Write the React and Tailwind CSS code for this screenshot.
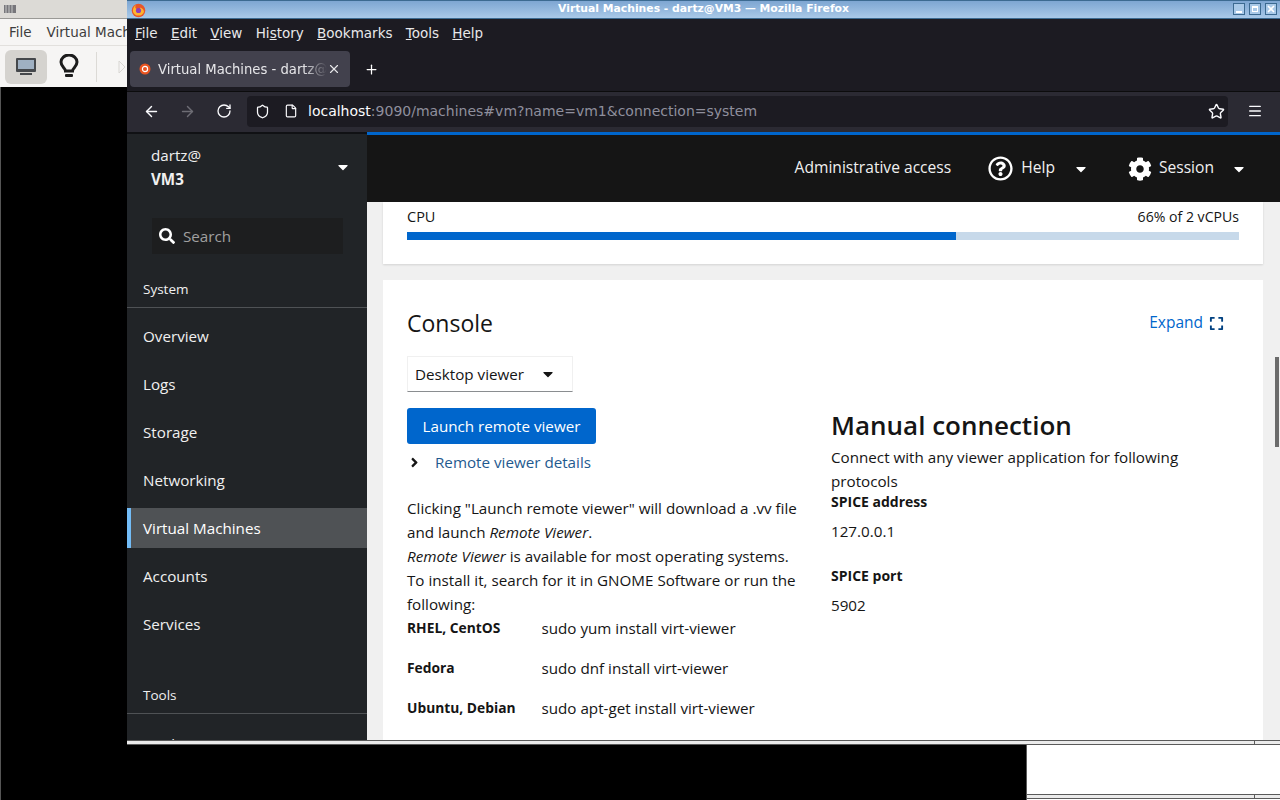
import React from "react";
import { ArrowLeft, ArrowRight, RotateCw, Shield, File, Star, Menu, X, Plus } from "lucide-react";
import { FaCog, FaRegQuestionCircle, FaSearch, FaCaretDown, FaAngleRight, FaExpand } from "react-icons/fa";

const nav = ["Overview", "Logs", "Storage", "Networking", "Virtual Machines", "Accounts", "Services"];

function Caret({ className }) {
  return <FaCaretDown className={className} size={16} />;
}

function BackWindow() {
  return (
    <div className="absolute left-0 top-0 h-[87px] w-[127px] overflow-hidden bg-[#f6f5f4] font-['DejaVu_Sans',sans-serif] text-[#3d3d3d]">
      <div className="flex h-[19px] items-center border-b border-[#9a9996] bg-[#dcdad6] pl-1">
        <svg width="12" height="10" viewBox="0 0 12 10"><rect x="0" y="1" width="12" height="8" fill="#77767b" /><path d="M2 1v8M5 1v8M8 1v8" stroke="#c8c8c8" /></svg>
      </div>
      <div className="flex h-[27px] items-center gap-[15px] whitespace-nowrap border-b border-[#e2e0dd] pl-[9px] text-[13.5px]">
        <span>File</span>
        <span>Virtual Machine</span>
      </div>
      <div className="flex h-[41px] items-center pl-[5px]">
        <div className="flex h-[34px] w-[42px] items-center justify-center rounded-md bg-[#d5d3cf]">
          <svg width="22" height="20" viewBox="0 0 22 20">
            <rect x="1" y="1" width="20" height="14" rx="1" fill="#45484c" />
            <rect x="3" y="3" width="16" height="9" fill="#9fb0c2" />
            <rect x="5" y="16" width="12" height="2" fill="#45484c" />
          </svg>
        </div>
        <div className="ml-[8px] flex w-[28px] justify-center">
          <svg width="20" height="25" viewBox="0 0 20 25" fill="none">
            <path d="M6.500 17c0-3-4.500-4-4.500-9a8 7 0 0 1 16 0c0 5-4.500 6-4.500 9z" stroke="#1c1c1c" strokeWidth="3" fill="#f6f5f4" />
            <rect x="6" y="20" width="8" height="3" rx="1" fill="#1c1c1c" />
          </svg>
        </div>
        <div className="ml-[13px] h-[30px] w-px bg-[#dcdad6]" />
        <svg className="ml-[21px]" width="8" height="14" viewBox="0 0 8 14" fill="none"><path d="M1 1l6 6-6 6z" stroke="#d8d6d3" /></svg>
      </div>
    </div>
  );
}

function TitleBar() {
  return (
    <div className="relative flex h-[19px] shrink-0 items-center justify-center border-y border-[#3c6a91] bg-gradient-to-b from-[#7ea6d2] to-[#a9c9e8]">
      <svg className="absolute left-[4px] top-[2px]" width="15" height="15" viewBox="0 0 15 15">
        <circle cx="7.5" cy="7.5" r="6.8" fill="#e8562a" />
        <path d="M2 9a6 6 0 0 0 11 0c0-2-1.500-4-4-4.500 1 2-2 3-3.500 1.500C4 5 4 3.500 5 2 3 3 1.500 6 2 9z" fill="#ffb52e" />
        <circle cx="7.500" cy="7.500" r="2.600" fill="#8f3fb8" />
      </svg>
      <span className="font-['DejaVu_Sans',sans-serif] text-[10.8px] font-bold text-white">Virtual Machines - dartz@VM3 — Mozilla Firefox</span>
      <div className="absolute right-[3px] top-[2px] flex gap-[4px]">
        <div className="flex h-[12px] w-[12px] items-end justify-center border border-[#3c6a91] bg-[#a9c9e8] pb-[1px]"><div className="h-[2px] w-[6px] bg-white" /></div>
        <div className="flex h-[12px] w-[12px] items-center justify-center border border-[#3c6a91] bg-[#a9c9e8]"><div className="h-[6px] w-[6px] border border-t-2 border-white" /></div>
        <div className="flex h-[12px] w-[12px] items-center justify-center border border-[#3c6a91] bg-[#a9c9e8]"><X size={10} strokeWidth={4} className="text-white" /></div>
      </div>
    </div>
  );
}

function MenuBar() {
  const items = [["F", "ile"], ["E", "dit"], ["V", "iew"], ["Hi", "s", "tory"], ["B", "ookmarks"], ["T", "ools"], ["H", "elp"]];
  return (
    <div className="flex h-[29px] shrink-0 items-center gap-[13.3px] bg-[#1c1b22] pl-[8px] font-['DejaVu_Sans',sans-serif] text-[13.5px] text-[#e8e8ea]">
      {items.map((it, i) => (
        <span key={i}>
          {it.length === 2 ? (<><span className="underline">{it[0]}</span>{it[1]}</>) : (<>{it[0]}<span className="underline">{it[1]}</span>{it[2]}</>)}
        </span>
      ))}
    </div>
  );
}

function TabBar() {
  return (
    <div className="flex h-[43px] shrink-0 items-start bg-[#1c1b22] pl-[3px] pt-[3px]">
      <div className="flex h-[36px] w-[220px] items-center rounded-[4px] bg-[#42414d] pl-[9px] pr-[9px] font-['DejaVu_Sans',sans-serif] text-[13.2px] text-[#e6e6e9]">
        <svg width="12" height="12" viewBox="0 0 12 12" className="shrink-0">
          <circle cx="6" cy="6" r="5.500" fill="#e95420" />
          <circle cx="6" cy="6" r="2.600" fill="none" stroke="#fff" strokeWidth="1.200" />
        </svg>
        <span className="ml-[7px] w-[174px] overflow-hidden whitespace-nowrap pt-[1px] [mask-image:linear-gradient(to_right,black_86%,transparent)]">Virtual Machines - dartz@VM3</span>
        <X size={14} className="ml-auto shrink-0 text-[#e6e6e9]" />
      </div>
      <Plus size={15} strokeWidth={2} className="ml-[14px] mt-[11px] text-white" />
    </div>
  );
}

function NavBar() {
  return (
    <div className="flex h-[41px] shrink-0 items-center border-t border-[#0c0c0d] bg-[#2b2a33] pb-[2px] pl-[16px] text-[#fbfbfe]">
      <ArrowLeft size={17} />
      <ArrowRight size={17} className="ml-[19px] text-[#6e6d75]" />
      <RotateCw size={16} className="ml-[20px]" />
      <div className="ml-[15px] flex h-[31px] w-[981px] shrink-0 items-center rounded-[4px] bg-[#1c1b22] pl-[8px] pr-[3px]">
        <Shield size={15} />
        <File size={14} className="ml-[14px]" />
        <span className="ml-[10px] font-['DejaVu_Sans',sans-serif] text-[14px] text-[#fbfbfe]">localhost<span className="text-[#8f8f9d]">:9090/machines#vm?name=vm1&amp;connection=system</span></span>
        <Star size={17} className="ml-auto" />
      </div>
      <Menu size={16} className="ml-[19px]" />
    </div>
  );
}

function Sidebar() {
  return (
    <aside className="flex w-[240px] shrink-0 flex-col overflow-hidden border-t-2 border-[#101114] bg-[#212427] text-[15.2px] text-[#f0f0f0]">
      <div className="flex items-center justify-between pl-[24px] pr-[16px] pt-[9px] leading-[24px]">
        <div>
          <div>dartz@</div>
          <div className="font-bold">VM3</div>
        </div>
        <Caret className="text-white" />
      </div>
      <div className="ml-[25px] mt-[27px] flex h-[36px] w-[191px] shrink-0 items-center bg-[#1d1e1f] pl-[7px] text-[#a0a0a0]">
        <FaSearch size={16} className="text-white" />
        <span className="ml-[8px]">Search</span>
      </div>
      <div className="mt-[25px] flex h-[29px] shrink-0 items-start border-b border-[#4f5255] pl-[16px] text-[13.5px] leading-[20px]">System</div>
      <div className="mt-[8px] flex shrink-0 flex-col gap-[8px]">
        {nav.map((n) => (
          <div key={n} className={n === "Virtual Machines" ? "flex h-[40px] items-center border-l-4 border-[#73bcf7] bg-[#4f5255] pl-[12px] text-white" : "flex h-[40px] items-center pl-[16px]"}>{n}</div>
        ))}
      </div>
      <div className="mt-[41px] flex h-[29px] shrink-0 items-start border-b border-[#4f5255] pl-[16px] text-[13.5px] leading-[20px]">Tools</div>
      <div className="mt-[10px] flex h-[40px] shrink-0 items-center pl-[16px]">Applications</div>
    </aside>
  );
}

function Header() {
  return (
    <div className="flex h-[70px] shrink-0 items-center justify-end border-t-[3px] border-[#0066cc] bg-[#151515] pr-[33px] text-[15.6px] text-[#f0f0f0]">
      <span className="pb-[2px]">Administrative access</span>
      <FaRegQuestionCircle size={25} className="ml-[37px] text-white" />
      <span className="ml-[8px] pb-[2px]">Help</span>
      <Caret className="ml-[18px] text-white" />
      <FaCog size={24} className="ml-[39px] text-white" />
      <span className="ml-[7px] pb-[2px]">Session</span>
      <Caret className="ml-[17px] text-white" />
    </div>
  );
}

function Row({ os, cmd }) {
  return (
    <div className="flex h-[40px] items-start">
      <span className="w-[134.500px] text-[13.8px] font-bold leading-[24px] text-[#151515]">{os}</span>
      <span className="leading-[24px]">{cmd}</span>
    </div>
  );
}

function Main() {
  return (
    <main className="flex min-w-0 flex-1 flex-col overflow-hidden">
      <Header />
      <div className="relative flex min-h-0 flex-1 flex-col gap-[16px] overflow-hidden bg-[#f0f0f0] pl-[16px] pr-[17px] text-[15.2px] text-[#151515]">
        <div className="h-[62px] shrink-0 bg-white px-[24px] shadow-[0_1px_2px_rgba(3,3,3,0.12)]">
          <div className="flex h-[30px] items-center justify-between text-[14.500px]">
            <span>CPU</span>
            <span className="text-[14.1px]">66% of 2 vCPUs</span>
          </div>
          <div className="flex h-[8px] bg-[#c7d9ea]">
            <div className="h-full w-[66%] bg-[#0066cc]" />
          </div>
        </div>
        <div className="flex-1 bg-white px-[24px] pt-[28px]">
          <div className="flex items-center justify-between pr-[15px]">
            <h2 className="text-[23px] leading-[30px]">Console</h2>
            <div className="flex items-center gap-[6px] text-[#0066cc]">
              <span className="text-[15.5px]">Expand</span>
              <FaExpand size={15} className="text-[#004080]" />
            </div>
          </div>
          <div className="mt-[18px] flex h-[36px] w-[166px] items-center justify-between border border-[#f0f0f0] border-b-[#8a8d90] pl-[7px] pr-[16px]">
            <span>Desktop viewer</span>
            <Caret className="text-[#151515]" />
          </div>
          <div className="mt-[16px] grid grid-cols-[424px_1fr]">
            <div>
              <div className="flex h-[36px] w-[189px] items-center justify-center rounded-[3px] bg-[#0066cc] text-white">Launch remote viewer</div>
              <div className="mt-[6px] flex h-[24px] items-center">
                <FaAngleRight size={15} className="text-[#151515]" />
                <span className="ml-[13px] text-[#1f5a8f]">Remote viewer details</span>
              </div>
              <div className="mt-[22px] w-[400px] leading-[24px]">
                <p>Clicking "Launch remote viewer" will download a .vv file and launch <i>Remote Viewer</i>.</p>
                <p><i>Remote Viewer</i> is available for most operating systems. To install it, search for it in GNOME Software or run the following:</p>
              </div>
              <Row os="RHEL, CentOS" cmd="sudo yum install virt-viewer" />
              <Row os="Fedora" cmd="sudo dnf install virt-viewer" />
              <Row os="Ubuntu, Debian" cmd="sudo apt-get install virt-viewer" />
            </div>
            <div className="-mt-[1px]">
              <h3 className="text-[26px] font-semibold leading-[36px]">Manual connection</h3>
              <p className="mt-[2px] w-[390px] leading-[24px]">Connect with any viewer application for following protocols</p>
              <div className="text-[14px] font-bold leading-[18px]">SPICE address</div>
              <div className="mt-[8px] leading-[24px]">127.0.0.1</div>
              <div className="mt-[24px] text-[14px] font-bold leading-[18px]">SPICE port</div>
              <div className="mt-[8px] leading-[24px]">5902</div>
            </div>
          </div>
        </div>
        <div className="absolute bottom-0 right-0 top-0 w-[5px]">
          <div className="mt-[155px] h-[90px] w-[4px] bg-[#6b6b6b]" />
        </div>
      </div>
    </main>
  );
}

function WindowEdge() {
  return (
    <div className="flex h-[5px] shrink-0 border-y border-[#5a5a5a] bg-[#ebebeb]">
      <div className="flex-1" />
      <div className="w-[26px] border-l border-[#5a5a5a]" />
    </div>
  );
}

export default function App() {
  return (
    <div className="relative h-[800px] w-[1280px] overflow-hidden bg-black font-['Open_Sans',sans-serif]">
      <BackWindow />
      <div className="absolute bottom-0 left-0 top-[87px] w-px bg-[#555555]" />
      <div className="absolute left-[127px] top-0 flex h-[745px] w-[1153px] flex-col">
        <TitleBar />
        <MenuBar />
        <TabBar />
        <NavBar />
        <div className="flex min-h-0 flex-1">
          <Sidebar />
          <Main />
        </div>
        <WindowEdge />
      </div>
      <div className="absolute left-[1026px] top-[745px] flex h-[55px] w-[254px] flex-col border-l border-[#5a5a5a] bg-white">
        <div className="flex-1" />
        <WindowEdge />
        <div className="h-[1px]" />
      </div>
    </div>
  );
}
